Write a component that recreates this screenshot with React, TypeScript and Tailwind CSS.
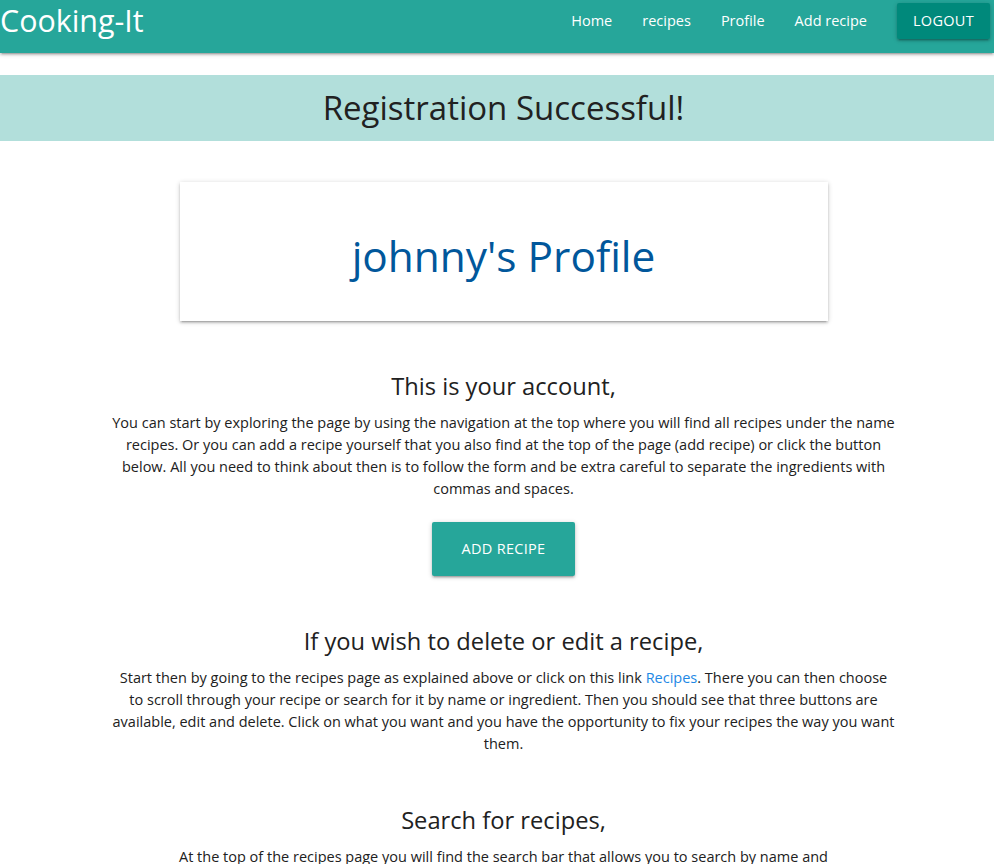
const font = { fontFamily: '"Open Sans", "Noto Sans", sans-serif' };

function Section({ title, children }: { title: string; children: React.ReactNode }) {
  return (
    <div className="flex flex-col items-center">
      <h5 className="text-[23.7px] leading-[30px] text-[#212121]">{title}</h5>
      <p className="mt-[11px] w-[784px] text-center text-[14.5px] leading-[22px] text-[#212121]">{children}</p>
    </div>
  );
}

export default function App() {
  return (
    <div style={font} className="min-h-[864px] bg-white">
      {/* Navbar */}
      <nav className="h-[53px] bg-[#26a69a] shadow-[0_2px_2px_0_rgba(0,0,0,0.14),0_3px_1px_-2px_rgba(0,0,0,0.12),0_1px_5px_0_rgba(0,0,0,0.2)] relative z-10">
        <div className="flex h-[42px] items-center justify-between">
          <a className="text-[30.4px] leading-[42px] text-white">Cooking-It</a>
          <ul className="flex items-center pr-[4px]">
            <li className="px-[15px] text-[14.5px] text-white">Home</li>
            <li className="px-[15px] text-[14.5px] text-white">recipes</li>
            <li className="px-[15px] text-[14.5px] text-white">Profile</li>
            <li className="px-[15px] text-[14.5px] text-white">Add recipe</li>
            <li className="ml-[15px]">
              <button className="h-[36px] rounded-[2px] bg-[#00897b] px-[16px] text-[14.5px] tracking-[0.3px] text-white shadow-[0_2px_2px_0_rgba(0,0,0,0.14),0_3px_1px_-2px_rgba(0,0,0,0.12),0_1px_5px_0_rgba(0,0,0,0.2)]">
                LOGOUT
              </button>
            </li>
          </ul>
        </div>
      </nav>

      {/* Banner */}
      <div className="mt-[22px] flex h-[66px] items-center justify-center bg-[#b2dfdb] pl-[13px]">
        <h4 className="text-[33px] leading-[40px] text-[#212121]">Registration Successful!</h4>
      </div>

      <div className="flex flex-col items-center pl-[13px]">
        {/* Profile card */}
        <div className="mt-[41px] flex h-[139px] w-[648px] items-center justify-center bg-white shadow-[0_2px_2px_0_rgba(0,0,0,0.14),0_3px_1px_-2px_rgba(0,0,0,0.12),0_1px_5px_0_rgba(0,0,0,0.2)]">
          <h3 className="pt-[8px] text-[42.4px] leading-[50px] text-[#01579b]">johnny's Profile</h3>
        </div>

        <div className="mt-[50px]">
          <Section title="This is your account,">
            You can start by exploring the page by using the navigation at the top where you will find all recipes under the name
            recipes. Or you can add a recipe yourself that you also find at the top of the page (add recipe) or click the button
            below. All you need to think about then is to follow the form and be extra careful to separate the ingredients with
            commas and spaces.
          </Section>
        </div>

        <button className="mt-[22px] h-[54px] shrink-0 rounded-[2px] bg-[#26a69a] px-[30px] text-[14.5px] tracking-[0.3px] text-white shadow-[0_2px_2px_0_rgba(0,0,0,0.14),0_3px_1px_-2px_rgba(0,0,0,0.12),0_1px_5px_0_rgba(0,0,0,0.2)]">
          ADD RECIPE
        </button>

        <div className="mt-[50px]">
          <Section title="If you wish to delete or edit a recipe,">
            Start then by going to the recipes page as explained above or click on this link{" "}
            <a className="text-[#1e88e5]">Recipes</a>. There you can then choose to scroll through your recipe or search for it
            by name or ingredient. Then you should see that three buttons are available, edit and delete. Click on what you want
            and you have the opportunity to fix your recipes the way you want them.
          </Section>
        </div>

        <div className="mt-[50px]">
          <Section title="Search for recipes,">
            At the top of the recipes page you will find the search bar that allows you to search by name and
            <br />
            ingredient. Type what you are looking for and press search to get the recipes that match your search.
          </Section>
        </div>
      </div>
    </div>
  );
}
